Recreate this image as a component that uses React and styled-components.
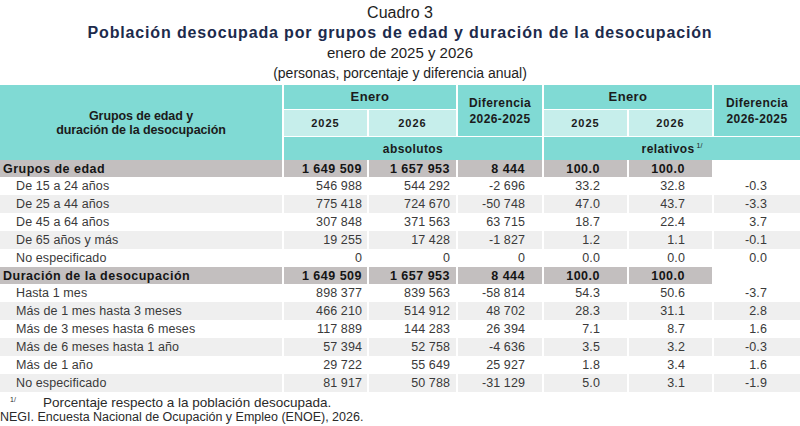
import React from 'react';
import styled, { createGlobalStyle } from 'styled-components';

const GlobalStyle = createGlobalStyle`
  html, body { margin: 0; padding: 0; background: #fff; }
  body { font-family: "Liberation Sans", Arial, sans-serif; }
`;

const COLS = '282px 83px 87px 84px 83px 83px 86px';
const TEAL = '#80dad4';
const LIGHT = '#c6eeeb';
const GRAY = '#c3bfbf';
const STRIPE = '#efefef';

const Page = styled.div`
  width: 800px;
  height: 426px;
  overflow: hidden;
  background: #fff;
`;

const TitleBlock = styled.header`
  padding-top: 3px;
  text-align: center;
`;

const TitleLine = styled.div`
  height: 20px;
  line-height: 20px;
  font-size: ${(p) => p.$size}px;
  font-weight: ${(p) => (p.$bold ? 700 : 400)};
  letter-spacing: ${(p) => p.$ls || 0}px;
  color: ${(p) => p.$color || '#1e1e1e'};
  white-space: nowrap;
`;

const HeadGrid = styled.div`
  margin-top: 2px;
  display: grid;
  grid-template-columns: ${COLS};
  grid-template-rows: 24px 26px 23px;
  column-gap: 2px;
  row-gap: 1px;
  background: #fff;
`;

const HeadCell = styled.div`
  grid-column: ${(p) => p.$col};
  grid-row: ${(p) => p.$row};
  background: ${(p) => (p.$light ? LIGHT : TEAL)};
  display: flex;
  align-items: center;
  justify-content: center;
  text-align: center;
  font-weight: 700;
  font-size: ${(p) => p.$size || 12}px;
  line-height: ${(p) => p.$lh || 14}px;
  letter-spacing: ${(p) => (p.$ls !== undefined ? p.$ls : 0.4)}px;
  color: #1b1b1b;
`;

const Sup = styled.sup`
  font-size: 7px;
  font-weight: 400;
  vertical-align: top;
  position: relative;
  top: -3px;
  margin-left: 2px;
  letter-spacing: 0;
`;

const Body = styled.div`
  display: flex;
  flex-direction: column;
`;

const Row = styled.div`
  display: grid;
  grid-template-columns: ${COLS};
  column-gap: 2px;
  height: ${(p) => (p.$group ? 17 : 18)}px;
`;

const PAD = [0, 5, 6, 17, 27, 27, 33];

const Cell = styled.div`
  background: ${(p) => (p.$blank ? '#fff' : p.$group ? GRAY : p.$stripe ? STRIPE : '#fff')};
  display: flex;
  align-items: center;
  justify-content: ${(p) => (p.$label ? 'flex-start' : 'flex-end')};
  padding-left: ${(p) => (p.$label ? (p.$group ? 3 : 16) : 0)}px;
  padding-right: ${(p) => p.$pr || 0}px;
  font-size: 12.5px;
  font-weight: ${(p) => (p.$group ? 700 : 400)};
  letter-spacing: ${(p) => (p.$group ? 0.5 : 0.1)}px;
  color: ${(p) => (p.$group ? '#151515' : '#3a3a3a')};
  white-space: nowrap;
`;

const Notes = styled.footer`
  margin-top: 3px;
  font-size: 13px;
  color: #2a2a2a;
`;

const NoteLine = styled.div`
  height: 15px;
  line-height: 15px;
  display: flex;
  white-space: nowrap;
  font-size: ${(p) => p.$size || 13}px;
`;

const NoteMark = styled.span`
  width: 43px;
  font-size: 7px;
  line-height: 9px;
  align-self: flex-start;
  padding-left: 10px;
  box-sizing: border-box;
`;

const NoteText = styled.span`
  font-size: 13.5px;
`;

const rows = [
  { label: 'Grupos de edad', group: true, v: ['1 649 509', '1 657 953', '8 444', '100.0', '100.0', ''] },
  { label: 'De 15 a 24 años', v: ['546 988', '544 292', '-2 696', '33.2', '32.8', '-0.3'] },
  { label: 'De 25 a 44 años', stripe: true, v: ['775 418', '724 670', '-50 748', '47.0', '43.7', '-3.3'] },
  { label: 'De 45 a 64 años', v: ['307 848', '371 563', '63 715', '18.7', '22.4', '3.7'] },
  { label: 'De 65 años y más', stripe: true, v: ['19 255', '17 428', '-1 827', '1.2', '1.1', '-0.1'] },
  { label: 'No especificado', v: ['0', '0', '0', '0.0', '0.0', '0.0'] },
  { label: 'Duración de la desocupación', group: true, v: ['1 649 509', '1 657 953', '8 444', '100.0', '100.0', ''] },
  { label: 'Hasta 1 mes', v: ['898 377', '839 563', '-58 814', '54.3', '50.6', '-3.7'] },
  { label: 'Más de 1 mes hasta 3 meses', stripe: true, v: ['466 210', '514 912', '48 702', '28.3', '31.1', '2.8'] },
  { label: 'Más de 3 meses hasta 6 meses', v: ['117 889', '144 283', '26 394', '7.1', '8.7', '1.6'] },
  { label: 'Más de 6 meses hasta 1 año', stripe: true, v: ['57 394', '52 758', '-4 636', '3.5', '3.2', '-0.3'] },
  { label: 'Más de 1 año', v: ['29 722', '55 649', '25 927', '1.8', '3.4', '1.6'] },
  { label: 'No especificado', stripe: true, v: ['81 917', '50 788', '-31 129', '5.0', '3.1', '-1.9'] },
];

export default function App() {
  return (
    <Page>
      <GlobalStyle />
      <TitleBlock>
        <TitleLine $size={16}>Cuadro 3</TitleLine>
        <TitleLine $size={16} $bold $ls={0.85} $color="#1d2b4c">
          Población desocupada por grupos de edad y duración de la desocupación
        </TitleLine>
        <TitleLine $size={15}>enero de 2025 y 2026</TitleLine>
        <TitleLine $size={14}>(personas, porcentaje y diferencia anual)</TitleLine>
      </TitleBlock>

      <HeadGrid>
        <HeadCell $col="1" $row="1 / span 3" $size={12.5} $lh={14} $ls={-0.1}>
          Grupos de edad y<br />duración de la desocupación
        </HeadCell>
        <HeadCell $col="2 / span 2" $row="1" $size={13}>Enero</HeadCell>
        <HeadCell $col="2" $row="2" $light $size={11} $ls={1}>2025</HeadCell>
        <HeadCell $col="3" $row="2" $light $size={11} $ls={1}>2026</HeadCell>
        <HeadCell $col="4" $row="1 / span 2" $lh={16}>
          Diferencia<br />2026-2025
        </HeadCell>
        <HeadCell $col="2 / span 3" $row="3" $size={12}>absolutos</HeadCell>
        <HeadCell $col="5 / span 2" $row="1" $size={13}>Enero</HeadCell>
        <HeadCell $col="5" $row="2" $light $size={11} $ls={1}>2025</HeadCell>
        <HeadCell $col="6" $row="2" $light $size={11} $ls={1}>2026</HeadCell>
        <HeadCell $col="7" $row="1 / span 2" $lh={16}>
          Diferencia<br />2026-2025
        </HeadCell>
        <HeadCell $col="5 / span 3" $row="3" $size={12}>
          relativos<Sup>1/</Sup>
        </HeadCell>
      </HeadGrid>

      <Body>
        {rows.map((r, i) => (
          <Row key={i} $group={r.group}>
            <Cell $label $group={r.group} $stripe={r.stripe}>{r.label}</Cell>
            {r.v.map((val, j) => (
              <Cell
                key={j}
                $group={r.group}
                $stripe={r.stripe}
                $blank={r.group && j === 5}
                $pr={PAD[j + 1]}
              >
                {val}
              </Cell>
            ))}
          </Row>
        ))}
      </Body>

      <Notes>
        <NoteLine>
          <NoteMark>1/</NoteMark>
          <NoteText>Porcentaje respecto a la población desocupada.</NoteText>
        </NoteLine>
        <NoteLine $size={12.5}>NEGI. Encuesta Nacional de Ocupación y Empleo (ENOE), 2026.</NoteLine>
      </Notes>
    </Page>
  );
}
